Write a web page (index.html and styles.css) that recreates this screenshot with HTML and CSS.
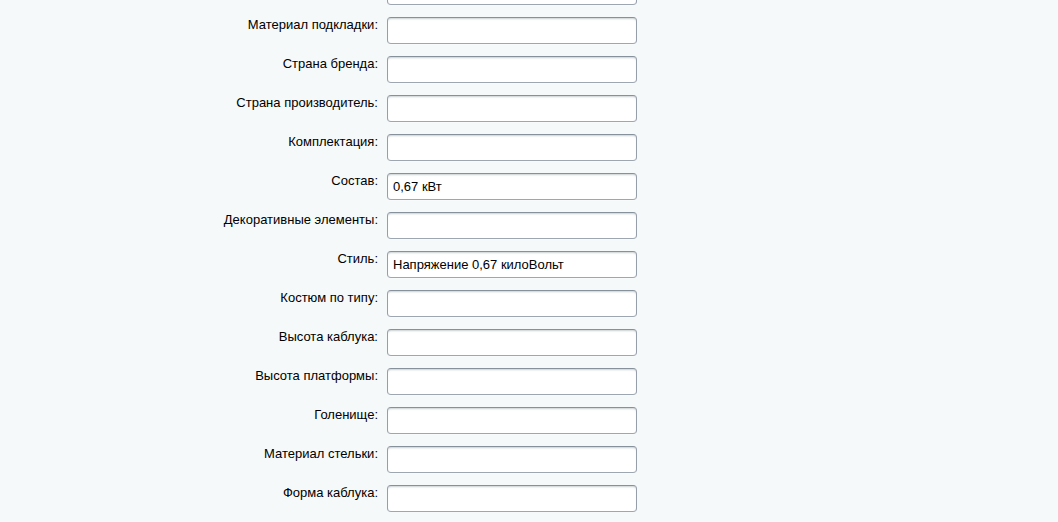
FILE: index.html
```html
<!DOCTYPE html>
<html lang="ru">
<head>
<meta charset="utf-8">
<link rel="stylesheet" href="styles.css">
</head>
<body>
<div class="form">
  <div class="label"></div><div class="field"><input class="inp" type="text" value=""></div>
  <div class="label">Материал подкладки:</div><div class="field"><input class="inp" type="text" value=""></div>
  <div class="label">Страна бренда:</div><div class="field"><input class="inp" type="text" value=""></div>
  <div class="label">Страна производитель:</div><div class="field"><input class="inp" type="text" value=""></div>
  <div class="label">Комплектация:</div><div class="field"><input class="inp" type="text" value=""></div>
  <div class="label">Состав:</div><div class="field"><input class="inp" type="text" value="0,67 кВт"></div>
  <div class="label">Декоративные элементы:</div><div class="field"><input class="inp" type="text" value=""></div>
  <div class="label">Стиль:</div><div class="field"><input class="inp" type="text" value="Напряжение 0,67 килоВольт"></div>
  <div class="label">Костюм по типу:</div><div class="field"><input class="inp" type="text" value=""></div>
  <div class="label">Высота каблука:</div><div class="field"><input class="inp" type="text" value=""></div>
  <div class="label">Высота платформы:</div><div class="field"><input class="inp" type="text" value=""></div>
  <div class="label">Голенище:</div><div class="field"><input class="inp" type="text" value=""></div>
  <div class="label">Материал стельки:</div><div class="field"><input class="inp" type="text" value=""></div>
  <div class="label">Форма каблука:</div><div class="field"><input class="inp" type="text" value=""></div>
</div>
</body>
</html>
```

FILE: styles.css
```css
html, body {
  margin: 0;
  padding: 0;
  background: #f5f9f9;
  overflow: hidden;
}
body {
  font-family: "Liberation Sans", Arial, sans-serif;
  font-size: 13px;
  color: #000;
}
.form {
  display: grid;
  grid-template-columns: 378px 250px;
  column-gap: 9px;
  row-gap: 12px;
  margin-top: -22px;
}
.label {
  text-align: right;
  line-height: 15px;
  padding-top: 0;
}
.field {
  height: 27px;
}
.inp {
  box-sizing: border-box;
  display: block;
  width: 250px;
  height: 27px;
  margin: 0;
  padding: 0 5px;
  border: 1px solid;
  border-color: #87919c #959ea9 #9ea7b1 #959ea9;
  border-radius: 4px;
  background: #fff;
  box-shadow: 0 1px 0 0 rgba(255,255,255,0.3), inset 0 2px 2px -1px rgba(180,188,191,0.7);
  font-family: "Liberation Sans", Arial, sans-serif;
  font-size: 13px;
  color: #000;
  outline: none;
}
```
